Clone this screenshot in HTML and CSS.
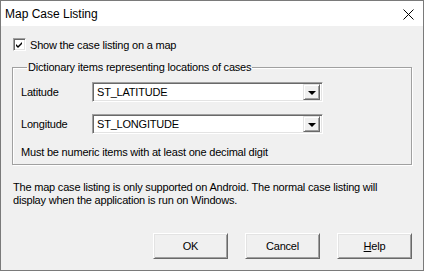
FILE: index.html
```html
<!DOCTYPE html>
<html lang="en">
<head>
  <meta charset="UTF-8" />
  <title>Map Case Listing</title>
  <link rel="stylesheet" href="styles.css">
</head>
<body>

  <div class="ventana">
    <div class="titulo">
      <span class="titulo-texto">Map Case Listing</span>
      <svg class="cerrar" width="11" height="11" viewBox="0 0 11 11">
        <path d="M0.5 0.5 L10.5 10.5 M10.5 0.5 L0.5 10.5" stroke="#000" stroke-width="1" fill="none" />
      </svg>
    </div>

    <div class="contenido">
      <label class="check-fila">
        <span class="check">
          <svg width="9" height="9" viewBox="0 0 9 9">
            <path d="M1 4 L3 6 L7 2 L7 4 L3 8 L1 6 Z" fill="#000" />
          </svg>
        </span>
        Show the case listing on a map
      </label>

      <fieldset class="grupo">
        <legend>Dictionary items representing locations of cases</legend>

        <div class="fila">
          <span class="etiqueta">Latitude</span>
          <div class="combo">
            <span class="combo-valor">ST_LATITUDE</span>
            <span class="combo-btn"><span class="flecha"></span></span>
          </div>
        </div>

        <div class="fila">
          <span class="etiqueta">Longitude</span>
          <div class="combo">
            <span class="combo-valor">ST_LONGITUDE</span>
            <span class="combo-btn"><span class="flecha"></span></span>
          </div>
        </div>

        <p class="nota">Must be numeric items with at least one decimal digit</p>
      </fieldset>

      <p class="aviso">The map case listing is only supported on Android. The normal case listing will display when the application is run on Windows.</p>

      <div class="botones">
        <button class="boton">OK</button>
        <button class="boton">Cancel</button>
        <button class="boton"><u>H</u>elp</button>
      </div>
    </div>
  </div>

</body>
</html>
```

FILE: styles.css
```css
* {
  box-sizing: border-box;
}

body {
  margin: 0;
  font-family: "Liberation Sans", Arial, sans-serif;
  font-size: 11px;
  letter-spacing: -0.2px;
  color: #000;
  background: #fff;
}

.ventana {
  width: 424px;
  height: 271px;
  border: 1px solid #7a7a7a;
  background: #f0f0f0;
  display: flex;
  flex-direction: column;
}

.titulo {
  height: 25px;
  background: #fff;
  display: flex;
  align-items: center;
  justify-content: space-between;
  padding: 0 9px 0 4px;
  letter-spacing: 0;
}

.titulo-texto {
  font-size: 12px;
}

.cerrar {
  margin-top: 1px;
}

.contenido {
  flex: 1;
  display: flex;
  flex-direction: column;
  padding: 12px 11px 11px 11px;
}

.check-fila {
  display: flex;
  align-items: center;
  gap: 4px;
  height: 13px;
  margin-left: 1px;
}

.check {
  width: 13px;
  height: 13px;
  background: #fff;
  border: 1px solid;
  border-color: #a0a0a0 #fff #fff #a0a0a0;
  box-shadow: inset 1px 1px #696969, inset -1px -1px #e3e3e3;
  display: flex;
  align-items: center;
  justify-content: center;
}

.grupo {
  margin: 10px 0 0 0;
  padding: 8px 8px 5px 8px;
  border: 1px solid #a0a0a0;
  box-shadow: 1px 1px #fff, inset 1px 1px #fff;
}

.grupo legend {
  padding: 0 1px;
  margin-left: 6px;
  line-height: 13px;
}

.fila {
  display: flex;
  align-items: center;
  height: 20px;
  margin-bottom: 12px;
}

.etiqueta {
  width: 71px;
}

.combo {
  width: 231px;
  height: 20px;
  background: #fff;
  border: 1px solid;
  border-color: #a0a0a0 #fff #fff #a0a0a0;
  box-shadow: inset 1px 1px #696969, inset -1px -1px #e3e3e3;
  display: flex;
  align-items: center;
  padding: 2px 2px 2px 4px;
}

.combo-valor {
  flex: 1;
}

.combo-btn {
  width: 17px;
  height: 16px;
  background: #f0f0f0;
  border: 1px solid;
  border-color: #e3e3e3 #696969 #696969 #e3e3e3;
  box-shadow: inset 1px 1px #fff, inset -1px -1px #a0a0a0;
  display: flex;
  align-items: center;
  justify-content: center;
}

.flecha {
  width: 0;
  height: 0;
  border-left: 4px solid transparent;
  border-right: 4px solid transparent;
  border-top: 4px solid #000;
  margin-top: 1px;
}

.nota {
  margin: 2px 0 0 0;
  line-height: 13px;
}

.aviso {
  margin: 16px 0 0 1px;
  line-height: 13px;
}

.botones {
  margin-top: auto;
  display: flex;
  justify-content: flex-end;
  gap: 17px;
}

.boton {
  width: 75px;
  height: 26px;
  font-family: "Liberation Sans", Arial, sans-serif;
  font-size: 11px;
  letter-spacing: -0.2px;
  color: #000;
  background: #f0f0f0;
  border: 1px solid;
  border-color: #fff #696969 #696969 #fff;
  box-shadow: inset 1px 1px #e3e3e3, inset -1px -1px #a0a0a0;
  padding: 0;
}
```
